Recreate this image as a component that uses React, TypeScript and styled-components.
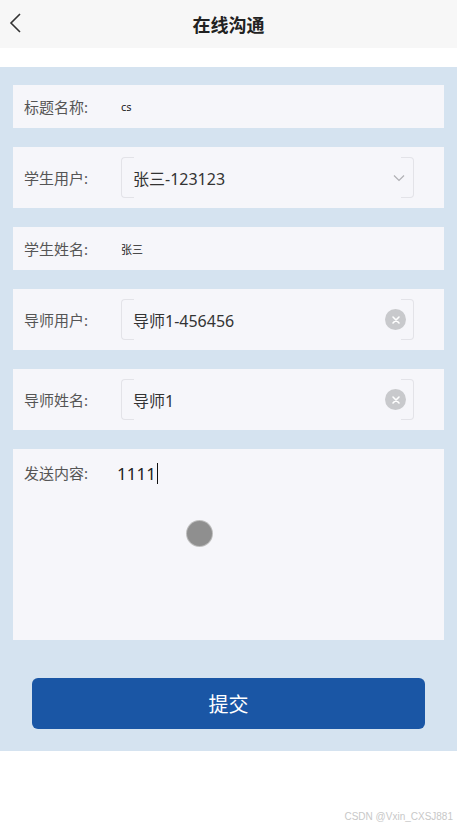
import React from 'react';
import styled, {createGlobalStyle} from 'styled-components';

const GlobalStyle = createGlobalStyle`
  html, body {
    margin: 0;
    padding: 0;
    background: #fff;
  }
  body {
    font-family: "Noto Sans", "Noto Sans CJK SC", sans-serif;
    color: #333;
  }
`;

const Page = styled.div`
  width: 457px;
  min-height: 826px;
  display: flex;
  flex-direction: column;
`;

const Header = styled.div`
  height: 48px;
  background: #f7f7f7;
  display: flex;
  align-items: center;
  justify-content: center;
  position: relative;
`;

const BackButton = styled.div`
  position: absolute;
  left: 8px;
  top: 12px;
  width: 16px;
  height: 22px;
  display: flex;
  align-items: center;
`;

const Title = styled.h1`
  margin: 0;
  font-size: 18px;
  font-weight: 700;
  color: #222;
`;

const Gap = styled.div`
  height: 19px;
`;

const Panel = styled.div`
  background: #d5e3f0;
  padding: 18px 13px 22px;
  display: flex;
  flex-direction: column;
  gap: 19px;
`;

const Card = styled.div<{ tall?: boolean }>`
  background: #f6f6fa;
  display: flex;
  align-items: ${props => props.tall ? 'flex-start' : 'center'};
  min-height: 43px;
  padding: ${props => props.tall ? '14px 11px 0' : '10px 11px'};
  height: ${props => props.tall ? '191px' : 'auto'};
  box-sizing: border-box;
  position: relative;
`;

const Label = styled.div`
  width: 97px;
  flex: none;
  font-size: 15px;
  color: #555;
  line-height: 20px;
`;

const SmallValue = styled.div`
  font-size: 11px;
  color: #222;
`;

const FieldBox = styled.div`
  position: relative;
  width: 293px;
  height: 41px;
  box-sizing: border-box;
  display: flex;
  align-items: center;
  padding: 0 8px 0 12px;

  &::before, &::after {
    content: '';
    position: absolute;
    top: 0;
    bottom: 0;
    width: 12px;
    border: 1px solid #e3e3e8;
  }
  &::before {
    left: 0;
    border-right: none;
    border-radius: 4px 0 0 4px;
  }
  &::after {
    right: 0;
    border-left: none;
    border-radius: 0 4px 4px 0;
  }
`;

const FieldText = styled.div`
  flex: 1;
  font-size: 16px;
  color: #333;
`;

const ClearIcon = styled.div`
  width: 21px;
  height: 21px;
  border-radius: 50%;
  background: #c8c9cc;
  display: flex;
  align-items: center;
  justify-content: center;
`;

const ContentText = styled.div`
  font-size: 17px;
  color: #222;
  margin-left: -4px;
  line-height: 20px;
  display: flex;
  align-items: center;
`;

const Caret = styled.span`
  display: inline-block;
  width: 1px;
  height: 21px;
  background: #111;
  margin-left: 1px;
`;

const TouchDot = styled.div`
  position: absolute;
  left: 174px;
  top: 72px;
  width: 25px;
  height: 25px;
  border-radius: 50%;
  background: #8f8f8f;
  box-shadow: 0 0 0 1px #bdbdbd;
`;

const SubmitButton = styled.button`
  margin: 19px 19px 0;
  height: 51px;
  border: none;
  border-radius: 6px;
  background: #1a56a5;
  color: #fff;
  font-family: inherit;
  font-size: 20px;
`;

const Footer = styled.div`
  flex: 1;
  display: flex;
  align-items: flex-end;
  justify-content: flex-end;
  padding: 0 4px 4px 0;
`;

const Watermark = styled.span`
  font-family: "Liberation Sans", Arial, sans-serif;
  font-size: 10px;
  color: #c8c8c8;
`;

function Chevron() {
  return (
    <svg width="14" height="14" viewBox="0 0 14 14">
      <path d="M2 4.5 L7 9.5 L12 4.5" fill="none" stroke="#b0b0b4" strokeWidth="1.2"/>
    </svg>
  );
}

function Clear() {
  return (
    <ClearIcon>
      <svg width="10" height="10" viewBox="0 0 10 10">
        <path d="M2 2 L8 8 M8 2 L2 8" stroke="#fff" strokeWidth="1.6" strokeLinecap="round"/>
      </svg>
    </ClearIcon>
  );
}

export default function App() {
  return (
    <Page>
      <GlobalStyle/>
      <Header>
        <BackButton>
          <svg width="14" height="22" viewBox="0 0 14 22">
            <path d="M12 2 L3 11 L12 20" fill="none" stroke="#333" strokeWidth="1.6"/>
          </svg>
        </BackButton>
        <Title>在线沟通</Title>
      </Header>
      <Gap/>
      <Panel>
        <Card>
          <Label>标题名称:</Label>
          <SmallValue>cs</SmallValue>
        </Card>
        <Card>
          <Label>学生用户:</Label>
          <FieldBox>
            <FieldText>张三-123123</FieldText>
            <Chevron/>
          </FieldBox>
        </Card>
        <Card>
          <Label>学生姓名:</Label>
          <SmallValue>张三</SmallValue>
        </Card>
        <Card>
          <Label>导师用户:</Label>
          <FieldBox>
            <FieldText>导师1-456456</FieldText>
            <Clear/>
          </FieldBox>
        </Card>
        <Card>
          <Label>导师姓名:</Label>
          <FieldBox>
            <FieldText>导师1</FieldText>
            <Clear/>
          </FieldBox>
        </Card>
        <Card tall>
          <Label>发送内容:</Label>
          <ContentText>1111<Caret/></ContentText>
          <TouchDot/>
        </Card>
        <SubmitButton>提交</SubmitButton>
      </Panel>
      <Footer>
        <Watermark>CSDN @Vxin_CXSJ881</Watermark>
      </Footer>
    </Page>
  );
}
